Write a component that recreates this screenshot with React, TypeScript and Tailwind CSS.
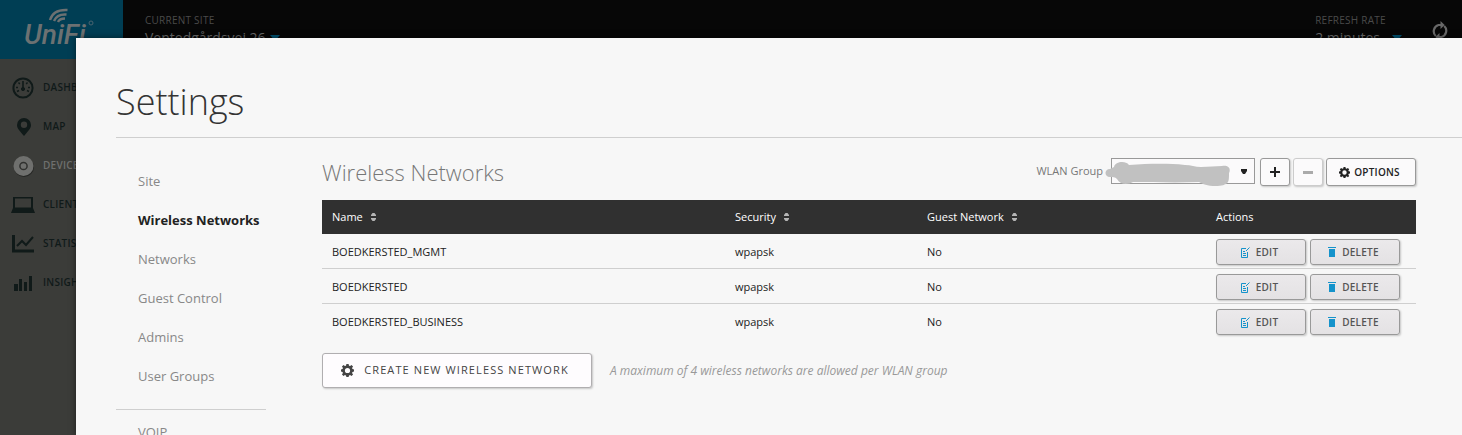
import { useState } from 'react'
import { clsx } from 'clsx'

const NAV = ['Site', 'Wireless Networks', 'Networks', 'Guest Control', 'Admins', 'User Groups']

const NETWORKS = [
  { name: 'BOEDKERSTED_MGMT', security: 'wpapsk', guest: 'No' },
  { name: 'BOEDKERSTED', security: 'wpapsk', guest: 'No' },
  { name: 'BOEDKERSTED_BUSINESS', security: 'wpapsk', guest: 'No' },
]

const COLUMNS = [
  { label: 'Name', class: 'w-[403px] pl-[10px]' },
  { label: 'Security', class: 'w-[192px] pl-[10px]' },
  { label: 'Guest Network', class: 'pl-[10px]' },
]

const SIDEBAR = [
  { label: 'DASHBOARD', icon: <GaugeIcon /> },
  { label: 'MAP', icon: <PinIcon /> },
  { label: 'DEVICES', icon: <DeviceIcon />, active: true },
  { label: 'CLIENTS', icon: <LaptopIcon /> },
  { label: 'STATISTICS', icon: <ChartIcon /> },
  { label: 'INSIGHTS', icon: <BarsIcon /> },
]

const BUTTON = 'flex items-center justify-center rounded-[3px] border shadow-[1px_1px_2px_rgba(0,0,0,0.2)]'
const ROW_BUTTON = `${BUTTON} h-[26px] w-[90px] gap-1.5 border-[#999] bg-linear-to-b from-[#ebe9eb] to-[#e4e2e4] pr-[3px]`

function GaugeIcon() {
  return (
    <svg width="22" height="22" viewBox="0 0 22 22" fill="none" stroke="currentColor">
      <circle cx="11" cy="11" r="9.6" strokeWidth="2" />
      <path d="M6.500 5.500l1.300 1.500M15.500 5.500L14.200 7M4 10.500h2M16 10.500h2M5 14.500l2-1M17 14.500l-2-1" strokeWidth="1.400" />
      <path d="M11 4v8" strokeWidth="1.600" />
      <circle cx="11" cy="12" r="1.600" fill="currentColor" />
    </svg>
  )
}

function PinIcon() {
  return (
    <svg width="22" height="20" viewBox="0 0 22 20" fill="currentColor">
      <path fillRule="evenodd" d="M12 1a7 7 0 0 0-7 7c0 4 3.500 6.500 7 11 3.500-4.500 7-7 7-11a7 7 0 0 0-7-7zm0 3.500a3.200 3.200 0 1 1 0 6.400 3.200 3.200 0 0 1 0-6.400z" />
    </svg>
  )
}

function DeviceIcon() {
  return (
    <svg width="22" height="22" viewBox="0 0 22 22">
      <circle cx="12" cy="12" r="10" fill="#252624" />
      <circle cx="11.500" cy="11" r="10" fill="currentColor" />
      <circle cx="11.500" cy="11" r="3.600" fill="none" stroke="#30312f" strokeWidth="1.500" />
    </svg>
  )
}

function LaptopIcon() {
  return (
    <svg width="24" height="18" viewBox="0 0 24 18" fill="currentColor">
      <path fillRule="evenodd" d="M2 1h20v11H2zM4 2.500v9h16v-9z" />
      <path d="M2 12h20l2 5H0z" />
    </svg>
  )
}

function ChartIcon() {
  return (
    <svg width="22" height="18" viewBox="0 0 22 18" fill="none" stroke="currentColor">
      <path d="M1.500 0v16H22" strokeWidth="3" />
      <path d="M5 11l5-5 4 4 7-8" strokeWidth="2" />
    </svg>
  )
}

function BarsIcon() {
  return (
    <svg width="20" height="16" viewBox="0 0 20 16" fill="currentColor">
      <path d="M1 9h4v7H1zM6 4h3v12H6zM11 7h3v9h-3zM16 1h3v15h-3z" />
    </svg>
  )
}

function GearIcon({ size }: { size: number }) {
  return (
    <svg width={size} height={size} viewBox="0 0 12 12" fill="currentColor">
      <path
        fillRule="evenodd"
        d="M5 0h2l.4 1.500 1 .4L9.700 1l1.400 1.400-.9 1.300.4 1L12 5v2l-1.400.4-.4 1 .9 1.300-1.400 1.400-1.300-.9-1 .4L7 12H5l-.4-1.400-1-.4-1.300.9L.9 9.700l.9-1.300-.4-1L0 7V5l1.400-.3.4-1L.9 2.400 2.300 1l1.300.9 1-.4zM6 3.600a2.400 2.400 0 1 0 0 4.800 2.400 2.400 0 0 0 0-4.800z"
      />
    </svg>
  )
}

function EditIcon() {
  return (
    <svg width="9" height="11" viewBox="0 0 9 11" fill="none" stroke="#1593cb">
      <path d="M5 1.500H.5v9h6V5M2 4.500h2M2 6.500h3M2 8.500h3" />
      <path d="M5 4L8.500 .5" />
    </svg>
  )
}

function TrashIcon() {
  return (
    <svg width="8" height="10" viewBox="0 0 8 10" fill="#1593cb">
      <path d="M0 0h8v1H0zM1 2h6v8H1z" />
    </svg>
  )
}

function RefreshIcon() {
  return (
    <svg width="16" height="20" viewBox="0 0 16 20" fill="none" stroke="currentColor" strokeWidth="2.200">
      <path d="M3.800 15A6.500 6.500 0 0 1 6.500 4H9M12.200 5A6.500 6.500 0 0 1 9.500 16H7" />
      <path d="M8.500 0v8l4.200-4zM7.500 12v8l-4.200-4z" fill="currentColor" stroke="none" />
    </svg>
  )
}

function SortIcon() {
  return (
    <svg width="5" height="8" viewBox="0 0 5 8" fill="#b5b5b5">
      <path d="M0 3V2l1.500-2h2L5 2v1zM0 5h5v1L3.500 8h-2L0 6z" />
    </svg>
  )
}

function DownArrow() {
  return (
    <svg width="10" height="6" viewBox="0 0 10 6" fill="#00506e">
      <path d="M0 0h10L5 6z" />
    </svg>
  )
}

function Logo() {
  return (
    <svg width="72" height="46" viewBox="0 0 72 46" fill="#6c7172" role="img" aria-label="UniFi">
      <text x="0" y="40" fontFamily="Roboto, 'Liberation Sans', sans-serif" fontSize="28" fontWeight="500" fontStyle="italic">
        UniFi
      </text>
      <g fill="none" stroke="#6c7172" strokeWidth="2.400">
        <path d="M26 16C28 9 34 5.500 43.500 6" />
        <path d="M30 17C32 12 36 10 42.500 10.500" />
        <path d="M34 18c1-2.500 4-3.500 7-3.500" />
      </g>
      <circle cx="67" cy="19" r="2" fill="none" stroke="#4a6470" />
    </svg>
  )
}

export default function App() {
  const [section, setSection] = useState('Wireless Networks')

  return (
    <div className="relative h-screen overflow-hidden bg-[#3b3c39] font-['Open_Sans',sans-serif]">
      <header className="flex h-[59px] bg-[#070707] text-[#4a4a4a]">
        <a href="#home" className="w-[123px] bg-[#003e54] pt-1 pl-6">
          <Logo />
        </a>
        <div className="flex flex-1 justify-between pt-3 pl-[22px]">
          <div>
            <p className="text-[10px] leading-4 tracking-wide">CURRENT SITE</p>
            <button className="flex items-center gap-1 text-sm leading-5 font-medium text-[#666]">
              Ventedgårdsvej 26
              <DownArrow />
            </button>
          </div>
          <div className="flex gap-[30px] pr-[14px]">
            <div>
              <p className="text-[10px] leading-4 tracking-wide">REFRESH RATE</p>
              <button className="flex items-center gap-3 text-sm leading-5 font-medium text-[#666]">
                2 minutes
                <DownArrow />
              </button>
            </div>
            <button aria-label="Refresh" className="h-8 pt-1.5 text-[#686868]">
              <RefreshIcon />
            </button>
          </div>
        </div>
      </header>

      <nav className="flex w-[123px] flex-col pt-[9px]">
        {SIDEBAR.map((item) => (
          <a
            key={item.label}
            href={`#${item.label.toLowerCase()}`}
            className={clsx(
              'flex h-[39px] items-center gap-2 pl-[11px] text-[10px] font-semibold tracking-wide',
              item.active ? 'text-[#6f706e]' : 'text-[#101a19]',
            )}
          >
            <span className="flex w-6 justify-center">{item.icon}</span>
            {item.label}
          </a>
        ))}
      </nav>

      <main
        role="dialog"
        aria-labelledby="settings-title"
        className="absolute top-[38px] right-0 bottom-0 left-[76px] overflow-hidden bg-[#f7f7f7] pl-10 shadow-[0_0_6px_rgba(0,0,0,0.5)]"
      >
        <h1 id="settings-title" className="border-b border-[#cfcfcf] pt-[38px] pb-[10px] text-4xl leading-[51px] font-light text-[#333]">
          Settings
        </h1>

        <div className="flex gap-14 pr-[46px]">
          <nav className="w-[150px] shrink-0 pt-[30px]">
            <ul className="border-b border-[#cfcfcf] pb-[7px] pl-[22px]">
              {NAV.map((item) => (
                <li key={item} className="h-[39px]">
                  <a
                    href="#settings"
                    onClick={() => setSection(item)}
                    className={clsx(
                      'text-[13px] leading-5 whitespace-nowrap',
                      item === section ? 'font-bold text-[#222]' : 'text-[#888]',
                    )}
                  >
                    {item}
                  </a>
                </li>
              ))}
            </ul>
            <a href="#voip" className="block pt-3 pl-[22px] text-[13px] leading-5 text-[#888]">VOIP</a>
          </nav>

          <section className="min-w-0 flex-1 pt-5">
            <div className="flex h-[42px] items-start justify-between">
              <h2 className="text-[22px] leading-7 font-light text-[#777]">Wireless Networks</h2>
              <div className="flex items-start">
                <label htmlFor="wlan-group" className="pr-2 text-[11px] leading-[26px] text-[#777]">WLAN Group</label>
                <div className="relative mr-[5px]">
                  <select id="wlan-group" className="block h-[26px] w-36 appearance-none border border-[#999] bg-[#fbfafb]" />
                  <svg className="pointer-events-none absolute top-[11px] right-2" width="6" height="5" viewBox="0 0 6 5" fill="#222">
                    <path d="M0 0h6v2L4 5H2L0 2z" />
                  </svg>
                  <svg className="pointer-events-none absolute top-1 -left-[7px]" width="128" height="25" viewBox="0 0 126 25" fill="#c1c1c1">
                    <path d="M9 5c1-5 11-7 15-2 18-1 36-2 56 0 6 0 10 2 16 2 8 0 14-1 21-1 7-1 9 3 7 7 0 5 0 7-1 9-2 3-7 4-12 4-9 0-13-2-17-4-25 1-48 0-66 0-5 3-13 3-16-3C10 15 8 15 5 15-1 15-1 7 5 7z" />
                  </svg>
                </div>
                <button aria-label="Add WLAN group" className={`${BUTTON} mr-[3px] h-7 w-[30px] border-[#999] bg-[#fbfafb]`}>
                  <svg width="10" height="10" viewBox="0 0 10 10" fill="#222"><path d="M4 0h2v4h4v2H6v4H4V6H0V4h4z" /></svg>
                </button>
                <button aria-label="Remove WLAN group" disabled className={`${BUTTON} mr-[3px] h-7 w-[30px] border-[#ccc] bg-[#fbfafb]`}>
                  <svg width="10" height="3" viewBox="0 0 10 3" fill="#aaa"><path d="M0 0h10v3H0z" /></svg>
                </button>
                <button className={`${BUTTON} h-7 w-[90px] gap-1 border-[#999] bg-[#fbfafb] pr-[3px] text-[10px] font-semibold tracking-wide text-[#222]`}>
                  <GearIcon size={11} />
                  OPTIONS
                </button>
              </div>
            </div>

            <table className="w-full table-fixed border-separate border-spacing-0 text-left text-[11px]">
              <thead>
                <tr className="h-[34px] bg-[#303030] text-white">
                  {COLUMNS.map((col) => (
                    <th key={col.label} className={`${col.class} font-medium`}>
                      <button className="flex items-center gap-2">
                        {col.label}
                        <SortIcon />
                      </button>
                    </th>
                  ))}
                  <th className="w-[200px] font-medium">Actions</th>
                </tr>
              </thead>
              <tbody>
                {NETWORKS.map((network) => (
                  <tr
                    key={network.name}
                    className="h-[35px] text-[#222] *:border-b *:border-[#cfcfcf] *:pt-[2px] last:*:border-transparent"
                  >
                    <td className="pl-[10px]">{network.name}</td>
                    <td className="pl-[10px]">{network.security}</td>
                    <td className="pl-[10px]">{network.guest}</td>
                    <td>
                      <div className="flex gap-1 text-[10px] font-semibold tracking-wide text-[#555]">
                        <button className={ROW_BUTTON}>
                          <EditIcon />
                          EDIT
                        </button>
                        <button className={ROW_BUTTON}>
                          <TrashIcon />
                          DELETE
                        </button>
                      </div>
                    </td>
                  </tr>
                ))}
              </tbody>
            </table>

            <div className="flex items-center gap-[18px] pt-[14px]">
              <button className={`${BUTTON} h-[35px] w-[270px] gap-[10px] border-[#b0aeb0] bg-[#fefcfe] pr-1 text-[11px] font-medium tracking-widest text-[#444]`}>
                <GearIcon size={13} />
                CREATE NEW WIRELESS NETWORK
              </button>
              <p className="text-xs text-[#999] italic">A maximum of 4 wireless networks are allowed per WLAN group</p>
            </div>
          </section>
        </div>
      </main>
    </div>
  )
}
